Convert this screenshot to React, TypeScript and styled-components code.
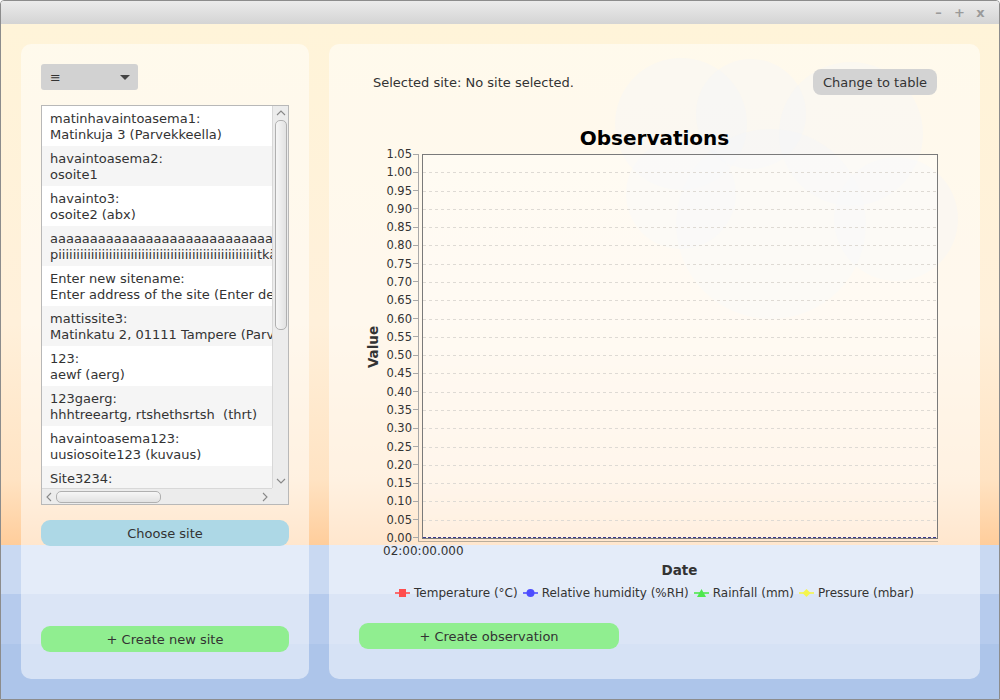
import React from "react";
import styled, { createGlobalStyle } from "styled-components";

const GlobalStyle = createGlobalStyle`
  html, body { margin: 0; padding: 0; }
  body {
    width: 1000px;
    height: 700px;
    overflow: hidden;
    font-family: "DejaVu Sans", "Liberation Sans", sans-serif;
    color: #333;
  }
  * { box-sizing: border-box; }
`;

const Window = styled.div`
  width: 1000px;
  height: 700px;
  border: 1px solid #8c8c8c;
  border-radius: 4px 4px 0 0;
  display: flex;
  flex-direction: column;
  overflow: hidden;
`;

const TitleBar = styled.div`
  height: 23px;
  flex: none;
  background: linear-gradient(to bottom, #ebebeb, #d4d4d4);
  display: flex;
  justify-content: flex-end;
  align-items: center;
  padding-right: 12px;
  gap: 8px;
`;

const WinControl = styled.span`
  width: 13px;
  text-align: center;
  font-size: 13px;
  font-weight: bold;
  color: #9a9a9a;
  line-height: 13px;
`;

const Content = styled.div`
  flex: 1;
  min-height: 0;
  position: relative;
  display: flex;
  gap: 20px;
  padding: 20px 19px 20px 20px;
  background:
    linear-gradient(
      to bottom,
      transparent 521px,
      #c9d9f2 521px,
      #c9d9f2 570px,
      #b6cbed 570px,
      #b6cbed 620px,
      #adc5ea 620px
    ),
    linear-gradient(
      to bottom,
      #fff4d9 0px,
      #fff0da 300px,
      #ffe3c3 455px,
      #ffcd9b 521px
    );
`;

const Cloud = styled.svg`
  position: absolute;
  left: 560px;
  top: 0;
  pointer-events: none;
`;

const Panel = styled.div`
  position: relative;
  z-index: 1;
  background: rgba(255, 255, 255, 0.5);
  border-radius: 10px;
  display: flex;
  flex-direction: column;
`;

const LeftPanel = styled(Panel)`
  width: 288px;
  flex: none;
  padding: 20px;
`;

const RightPanel = styled(Panel)`
  flex: 1;
  padding: 25px 30px 30px;
`;

const Combo = styled.div`
  width: 97px;
  height: 26px;
  background: #d2d2d2;
  border-radius: 3px;
  display: flex;
  align-items: center;
  justify-content: space-between;
  padding: 0 8px 0 9px;
  font-size: 13px;
  color: #333;
`;

const ComboArrow = styled.span`
  width: 0;
  height: 0;
  border-left: 5px solid transparent;
  border-right: 5px solid transparent;
  border-top: 5px solid #444;
`;

const ListBox = styled.div`
  margin-top: 15px;
  height: 400px;
  border: 1px solid #b8b8b8;
  background: #fff;
  display: grid;
  grid-template-columns: 1fr 16px;
  grid-template-rows: 1fr 16px;
`;

const Viewport = styled.div`
  overflow: hidden;
`;

const Row = styled.div`
  height: 40px;
  padding: 5px 8px 3px;
  line-height: 16px;
  font-size: 13px;
  color: #333;
  white-space: nowrap;
  &:nth-child(even) {
    background: #f5f5f5;
  }
`;

const VScroll = styled.div`
  background: #ececec;
  border-left: 1px solid #d8d8d8;
  display: flex;
  flex-direction: column;
  align-items: center;
`;

const HScroll = styled.div`
  background: #ececec;
  border-top: 1px solid #d8d8d8;
  display: flex;
  align-items: center;
`;

const Corner = styled.div`
  background: #ececec;
`;

const ArrowBox = styled.div`
  width: 14px;
  height: 14px;
  flex: none;
  display: flex;
  align-items: center;
  justify-content: center;
`;

const VThumb = styled.div`
  width: 12px;
  height: 210px;
  border: 1px solid #b0b0b0;
  border-radius: 5px;
  background: linear-gradient(to right, #f6f6f6, #e2e2e2);
`;

const HThumb = styled.div`
  height: 12px;
  width: 105px;
  border: 1px solid #b0b0b0;
  border-radius: 5px;
  background: linear-gradient(to bottom, #f6f6f6, #e2e2e2);
`;

const Spacer = styled.div`
  flex: 1;
`;

const Button = styled.button<{ $bg: string; $mt: number; $w?: number }>`
  display: block;
  margin-top: ${(p) => p.$mt}px;
  width: ${(p) => (p.$w ? `${p.$w}px` : "100%")};
  height: 26px;
  flex: none;
  border: none;
  border-radius: 9px;
  background: ${(p) => p.$bg};
  font-family: "DejaVu Sans", sans-serif;
  font-size: 13px;
  color: #333;
  padding: 0 9px;
`;

const TopRow = styled.div`
  height: 26px;
  display: flex;
  align-items: center;
  justify-content: space-between;
  padding: 0 13px 0 14px;
  font-size: 13px;
`;

const SmallButton = styled.button`
  height: 26px;
  border: none;
  border-radius: 8px;
  background: #d3d3d3;
  font-family: "DejaVu Sans", sans-serif;
  font-size: 13px;
  color: #333;
  padding: 0 10px;
`;

const Chart = styled.div`
  display: flex;
  flex-direction: column;
`;

const ChartTitle = styled.div`
  margin-top: 31px;
  height: 24px;
  line-height: 24px;
  text-align: center;
  font-size: 20px;
  font-weight: bold;
  color: #000;
`;

const ChartBody = styled.div`
  padding: 0 12px 0 5px;
  display: flex;
  flex-direction: column;
`;

const PlotRow = styled.div`
  margin-top: 4px;
  display: flex;
  align-items: flex-start;
`;

const YTitle = styled.div`
  width: 18px;
  height: 385px;
  display: flex;
  align-items: center;
  justify-content: center;
  & > span {
    transform: rotate(-90deg);
    white-space: nowrap;
    font-size: 13.5px;
    font-weight: bold;
    color: #333;
  }
`;

const TickColumn = styled.div`
  width: 36px;
  height: 398px;
  margin: -7px 0;
  display: flex;
  flex-direction: column;
  justify-content: space-between;
`;

const Tick = styled.div`
  height: 14px;
  line-height: 14px;
  display: flex;
  justify-content: flex-end;
  align-items: center;
  font-size: 11.5px;
  color: #333;
`;

const TickMark = styled.span`
  width: 5px;
  height: 1px;
  margin-left: 1px;
  background: #a8a8a8;
`;

const YAxisLine = styled.div`
  width: 1px;
  height: 388px;
  margin-bottom: -3px;
  background: #a8a8a8;
`;

const Plot = styled.div`
  margin-left: 3px;
  flex: 1;
  height: 385px;
  border: 1px solid #7a7a7a;
  background: rgba(255, 255, 255, 0.35);
  & > svg {
    display: block;
  }
`;

const XAxisLine = styled.div`
  margin: 2px 0 0 54px;
  height: 1px;
  background: #b9ad9c;
`;

const XTickLabel = styled.div`
  margin: 2px 0 0 19px;
  font-size: 12px;
  line-height: 14px;
  color: #333;
`;

const XTitle = styled.div`
  margin: 4px 0 0 58px;
  width: 515px;
  text-align: center;
  font-size: 13.5px;
  line-height: 16px;
  font-weight: bold;
  color: #333;
`;

const Legend = styled.div`
  margin-top: 7px;
  display: flex;
  justify-content: center;
  gap: 5px;
  font-size: 12px;
  line-height: 16px;
  color: #333;
`;

const LegendItem = styled.div`
  display: flex;
  align-items: center;
  gap: 4px;
`;

const Chevron = ({ dir }: { dir: "up" | "down" | "left" | "right" }) => {
  const pts: Record<string, string> = {
    up: "2,8 6,4 10,8",
    down: "2,4 6,8 10,4",
    left: "8,2 4,6 8,10",
    right: "4,2 8,6 4,10",
  };
  return (
    <svg width="12" height="12" viewBox="0 0 12 12">
      <polyline points={pts[dir]} fill="none" stroke="#888" strokeWidth="1.1" />
    </svg>
  );
};

const Symbol = ({ kind, color }: { kind: string; color: string }) => (
  <svg width="15" height="10" viewBox="0 0 15 10">
    <line x1="0" y1="5" x2="15" y2="5" stroke={color} strokeWidth="2" opacity="0.8" />
    {kind === "square" && <rect x="4" y="1" width="7" height="8" fill={color} />}
    {kind === "circle" && <circle cx="7.5" cy="5" r="4" fill={color} />}
    {kind === "triangle" && <polygon points="7.5,1 12,9 3,9" fill={color} />}
    {kind === "diamond" && <polygon points="7.5,1 11.5,5 7.5,9 3.5,5" fill={color} />}
  </svg>
);

const sites: [string, string][] = [
  ["matinhavaintoasema1:", "Matinkuja 3 (Parvekkeella)"],
  ["havaintoasema2:", "osoite1"],
  ["havainto3:", "osoite2 (abx)"],
  ["a".repeat(40) + ":", "p" + "i".repeat(55) + "tkä osoite"],
  ["Enter new sitename:", "Enter address of the site (Enter description)"],
  ["mattissite3:", "Matinkatu 2, 01111 Tampere (Parvekkeella)"],
  ["123:", "aewf (aerg)"],
  ["123gaerg:", "hhhtreeartg, rtshethsrtsh\u00a0 (thrt)"],
  ["havaintoasema123:", "uusiosoite123 (kuvaus)"],
  ["Site3234:", "osoite (kuvaus)"],
];

const ticks = Array.from({ length: 22 }, (_, i) => (1.05 - i * 0.05).toFixed(2));

const legend = [
  { kind: "square", color: "#ff4d4d", label: "Temperature (°C)" },
  { kind: "circle", color: "#4d4dff", label: "Relative humidity (%RH)" },
  { kind: "triangle", color: "#4de84d", label: "Rainfall (mm)" },
  { kind: "diamond", color: "#f5f54d", label: "Pressure (mbar)" },
];

const step = 384 / 21;

export default function App() {
  return (
    <>
      <GlobalStyle />
      <Window>
        <TitleBar>
          <WinControl>–</WinControl>
          <WinControl>+</WinControl>
          <WinControl>x</WinControl>
        </TitleBar>
        <Content>
          <Cloud width="440" height="320" viewBox="0 0 440 320">
            <g fill="rgba(228,234,242,0.34)">
              <circle cx="120" cy="100" r="66" />
              <circle cx="190" cy="90" r="55" />
              <circle cx="290" cy="110" r="72" />
              <circle cx="335" cy="195" r="62" />
              <circle cx="210" cy="200" r="95" />
              <circle cx="120" cy="170" r="55" />
            </g>
          </Cloud>
          <LeftPanel>
            <Combo>
              <span>≡</span>
              <ComboArrow />
            </Combo>
            <ListBox>
              <Viewport>
                {sites.map(([name, addr], i) => (
                  <Row key={i}>
                    {name}
                    <br />
                    {addr}
                  </Row>
                ))}
              </Viewport>
              <VScroll>
                <ArrowBox>
                  <Chevron dir="up" />
                </ArrowBox>
                <VThumb />
                <Spacer />
                <ArrowBox>
                  <Chevron dir="down" />
                </ArrowBox>
              </VScroll>
              <HScroll>
                <ArrowBox>
                  <Chevron dir="left" />
                </ArrowBox>
                <HThumb />
                <Spacer />
                <ArrowBox>
                  <Chevron dir="right" />
                </ArrowBox>
              </HScroll>
              <Corner />
            </ListBox>
            <Button $bg="#add8e6" $mt={15}>
              Choose site
            </Button>
            <Button $bg="#90ee90" $mt={80}>
              + Create new site
            </Button>
          </LeftPanel>
          <RightPanel>
            <TopRow>
              <span>Selected site: No site selected.</span>
              <SmallButton>Change to table</SmallButton>
            </TopRow>
            <Chart>
              <ChartTitle>Observations</ChartTitle>
              <ChartBody>
                <PlotRow>
                  <YTitle>
                    <span>Value</span>
                  </YTitle>
                  <TickColumn>
                    {ticks.map((t) => (
                      <Tick key={t}>
                        {t}
                        <TickMark />
                      </Tick>
                    ))}
                  </TickColumn>
                  <YAxisLine />
                  <Plot>
                    <svg width="513" height="383" viewBox="0 0 513 383">
                      {Array.from({ length: 20 }, (_, k) => {
                        const y = Math.round((k + 1) * step) - 0.5;
                        return (
                          <line
                            key={k}
                            x1="0"
                            x2="513"
                            y1={y}
                            y2={y}
                            stroke="#dedad4"
                            strokeWidth="1"
                            strokeDasharray="3 3"
                          />
                        );
                      })}
                      <line
                        x1="0"
                        x2="513"
                        y1="382.5"
                        y2="382.5"
                        stroke="#3b3b8f"
                        strokeWidth="1"
                        strokeDasharray="3 2"
                      />
                    </svg>
                  </Plot>
                </PlotRow>
                <XAxisLine />
                <XTickLabel>02:00:00.000</XTickLabel>
                <XTitle>Date</XTitle>
              </ChartBody>
              <Legend>
                {legend.map((l) => (
                  <LegendItem key={l.label}>
                    <Symbol kind={l.kind} color={l.color} />
                    <span>{l.label}</span>
                  </LegendItem>
                ))}
              </Legend>
            </Chart>
            <Button $bg="#90ee90" $mt={22} $w={260}>
              + Create observation
            </Button>
          </RightPanel>
        </Content>
      </Window>
    </>
  );
}
